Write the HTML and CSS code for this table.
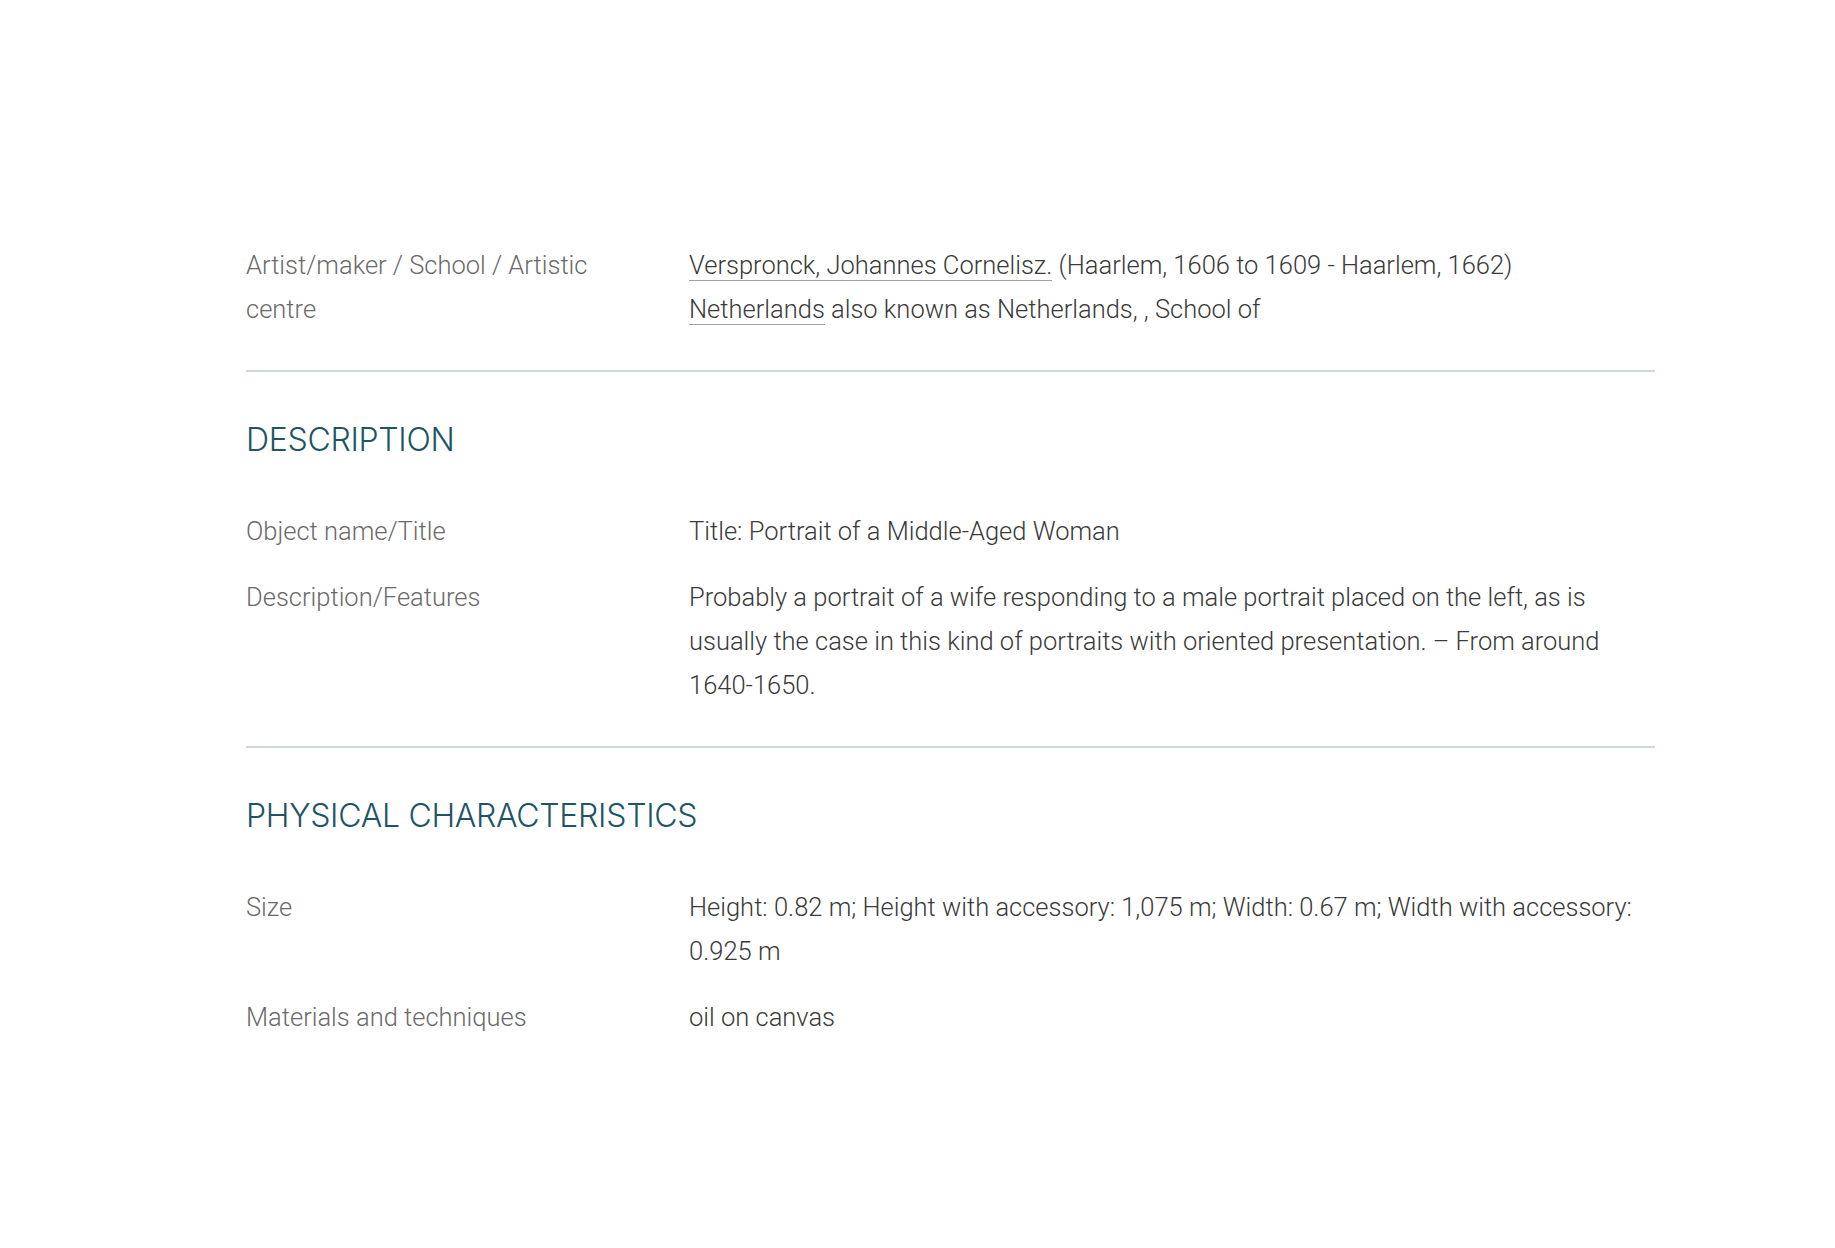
FILE: index.html
```html
<!DOCTYPE html>
<html lang="en">
<head>
<meta charset="utf-8">
<title>Portrait of a Middle-Aged Woman</title>
<link rel="stylesheet" href="styles.css">
</head>
<body>
<main class="record">
  <section class="block">
    <div class="row">
      <div class="label">Artist/maker / School / Artistic centre</div>
      <div class="value"><a class="link" href="#">Verspronck, Johannes Cornelisz.</a> (Haarlem, 1606 to 1609 - Haarlem, 1662)<br><a class="link" href="#">Netherlands</a> also known as Netherlands, , School of</div>
    </div>
  </section>
  <section class="block">
    <h2 class="heading">DESCRIPTION</h2>
    <div class="row">
      <div class="label">Object name/Title</div>
      <div class="value">Title: Portrait of a Middle-Aged Woman</div>
    </div>
    <div class="row">
      <div class="label">Description/Features</div>
      <div class="value">Probably a portrait of a wife responding to a male portrait placed on the left, as is usually the case in this kind of portraits with oriented presentation. – From around 1640-1650.</div>
    </div>
  </section>
  <section class="block last">
    <h2 class="heading">PHYSICAL CHARACTERISTICS</h2>
    <div class="row">
      <div class="label">Size</div>
      <div class="value">Height: 0.82 m; Height with accessory: 1,075 m; Width: 0.67 m; Width with accessory: 0.925 m</div>
    </div>
    <div class="row">
      <div class="label">Materials and techniques</div>
      <div class="value">oil on canvas</div>
    </div>
  </section>
</main>
</body>
</html>
```

FILE: styles.css
```css
html, body {
  margin: 0;
  padding: 0;
  background: #ffffff;
}

body {
  font-family: Roboto, "Liberation Sans", sans-serif;
  font-weight: 300;
  font-size: 25.5px;
  line-height: 44px;
  color: #3a3a3a;
}

.record {
  width: 1409px;
  margin: 0 0 0 246px;
  padding-top: 243px;
}

.block {
  border-bottom: 2px solid #cdd9dc;
  padding-bottom: 17px;
}

.block.last {
  border-bottom: none;
}

.heading {
  margin: 0;
  padding-top: 46px;
  padding-bottom: 47px;
  font-family: Inter, "Open Sans", sans-serif;
  font-weight: 300;
  font-size: 32px;
  line-height: 44px;
  letter-spacing: -0.3px;
  color: #1d5563;
}

.row {
  display: grid;
  grid-template-columns: 443px 1fr;
  margin-bottom: 22px;
}

.label {
  color: #6a6a6a;
  padding-right: 60px;
}

.value {
  color: #3a3a3a;
}

.link {
  color: inherit;
  text-decoration: none;
  border-bottom: 1.5px solid #a3a3a3;
}
```
